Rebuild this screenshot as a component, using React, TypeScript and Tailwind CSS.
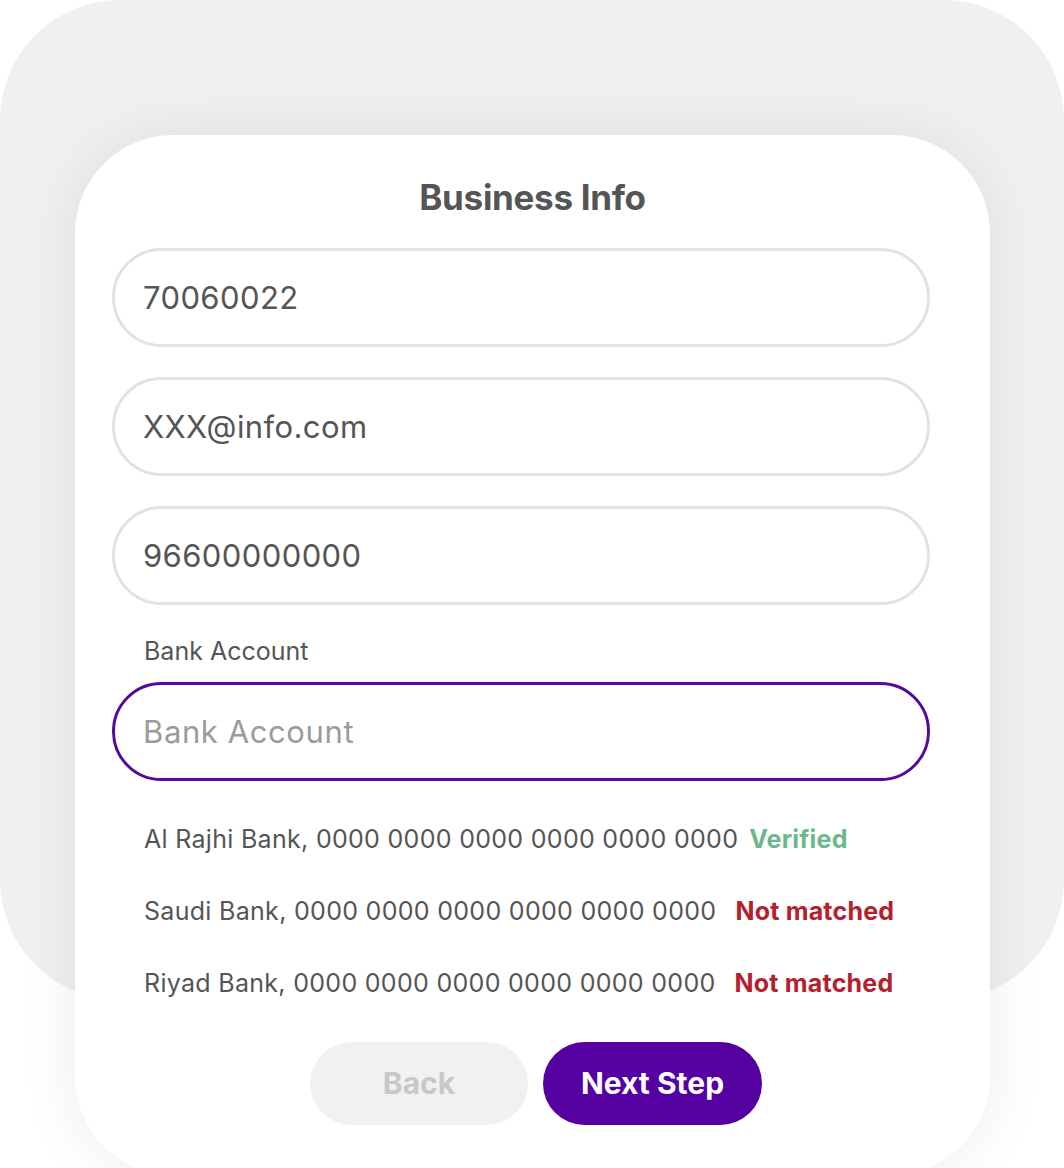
import React from "react";

const font = { fontFamily: "Inter, 'Noto Sans', sans-serif" };

type Account = {
  bank: string;
  status: "Verified" | "Not matched";
};

const accounts: Account[] = [
  { bank: "Al Rajhi Bank", status: "Verified" },
  { bank: "Saudi Bank", status: "Not matched" },
  { bank: "Riyad Bank", status: "Not matched" },
];

function Field({ value }: { value: string }) {
  return (
    <input
      defaultValue={value}
      readOnly
      className="block h-[99px] w-[818px] rounded-full border-[3px] border-[#e1e1e8] bg-white pl-[28px] text-[31px] tracking-[0.4px] text-[#555555] outline-none"
    />
  );
}

export default function App() {
  return (
    <div
      className="relative h-[1168px] w-[1064px] overflow-hidden bg-white"
      style={font}
    >
      {/* backdrop panel behind the card */}
      <div className="absolute left-0 top-0 h-[1000px] w-[1064px] rounded-[120px] bg-[#f0f0f0]" />

      <div className="relative ml-[75px] mt-[135px] flex h-[1040px] w-[915px] flex-col rounded-[98px] bg-white pt-[41px] shadow-[0_0_60px_rgba(0,0,0,0.08)]">
        <h1 className="text-center text-[35px] font-bold leading-[42px] tracking-[-0.3px] text-[#555555]">
          Business Info
        </h1>

        <div className="ml-[37px] mt-[30px] flex flex-col gap-[30px]">
          <Field value="70060022" />
          <Field value="XXX@info.com" />
          <Field value="96600000000" />
        </div>

        <label className="ml-[69px] mt-[30px] text-[25px] leading-[32px] text-[#555555]">
          Bank Account
        </label>
        <input
          placeholder="Bank Account"
          className="ml-[37px] mt-[15px] block h-[99px] w-[818px] rounded-full border-[3.5px] border-[#55089c] bg-white pl-[28px] text-[31px] tracking-[0.6px] text-[#555555] outline-none placeholder:text-[#9b9b9b]"
        />

        <div className="ml-[69px] mt-[42px] flex flex-col gap-[40px]">
          {accounts.map((a) => (
            <div
              key={a.bank}
              className="flex h-[32px] items-center text-[25px] leading-[32px] tracking-[0.3px] text-[#555555]"
            >
              <span>{a.bank}, 0000 0000 0000 0000 0000 0000</span>
              {a.status === "Verified" ? (
                <span className="ml-[11px] font-bold tracking-[0.2px] text-[#69b98a]">
                  Verified
                </span>
              ) : (
                <span className="ml-[19px] font-bold tracking-[0.2px] text-[#b4202d]">
                  Not matched
                </span>
              )}
            </div>
          ))}
        </div>

        <div className="mt-[43px] flex justify-center gap-[15px] pl-[7px]">
          <button className="h-[83px] w-[218px] rounded-full bg-[#f1f1f1] text-[30px] font-bold text-[#c8c8c8]">
            Back
          </button>
          <button className="h-[83px] w-[219px] rounded-full bg-[#5500a0] text-[30px] font-bold text-white">
            Next Step
          </button>
        </div>
      </div>
    </div>
  );
}
